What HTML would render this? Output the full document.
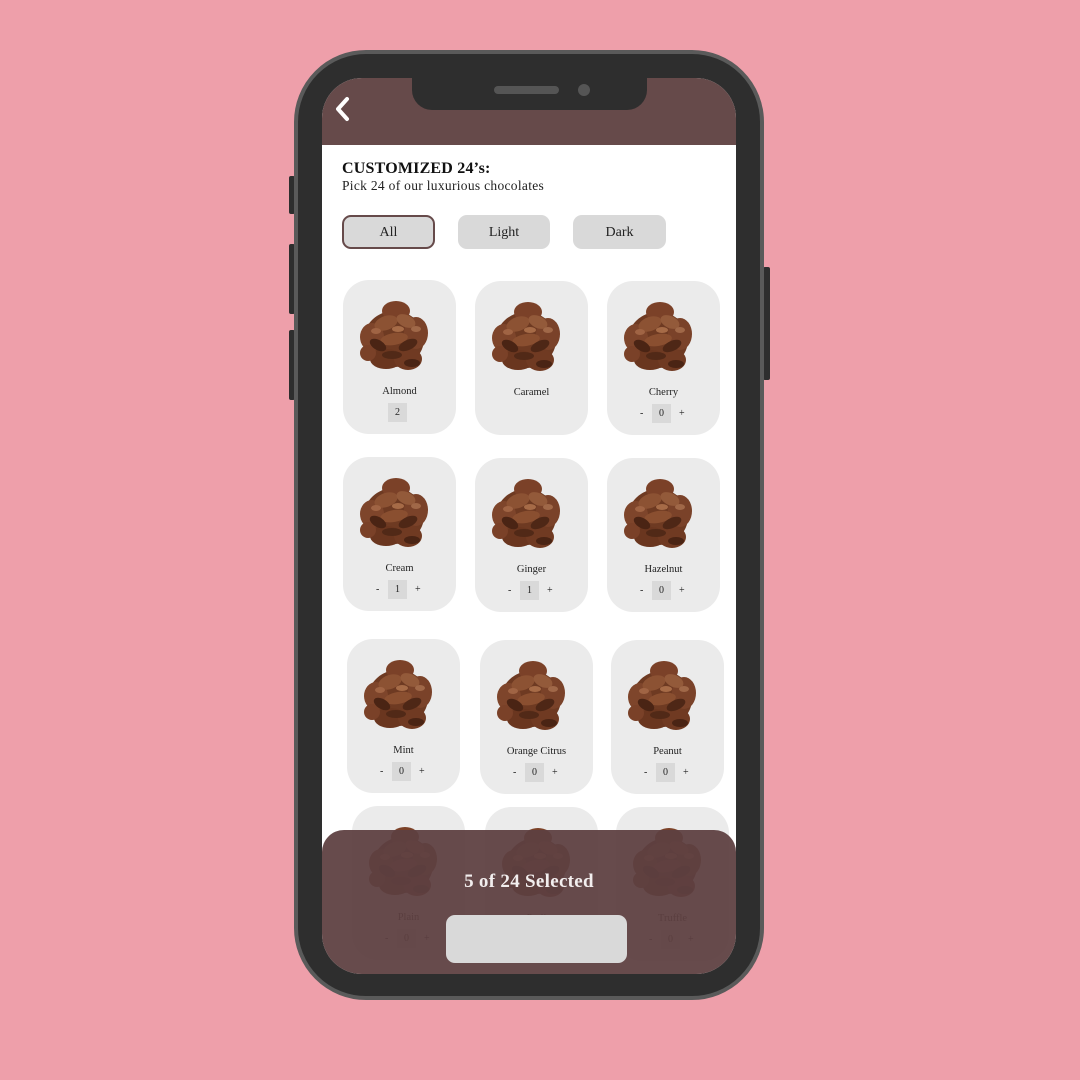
<!DOCTYPE html>
<html><head><meta charset="utf-8">
<style>
*{margin:0;padding:0;box-sizing:border-box}
body{width:1080px;height:1080px;background:#ee9faa;position:relative;overflow:hidden;font-family:"Liberation Serif",serif}
.abs{position:absolute}
.phone{left:294px;top:50px;width:470px;height:950px;border-radius:72px;background:#2e2e2e;border:4px solid #5a5a5a}
.btn{background:#2e2e2e;border-radius:2px}
.screen{left:322px;top:78px;width:414px;height:896px;border-radius:40px;background:#fff;overflow:hidden}
.header{left:0;top:0;width:414px;height:67px;background:#664a4a}
.notch{left:90px;top:0;width:235px;height:32px;background:#2e2e2e;border-radius:0 0 20px 20px}
.card{width:113px;height:154px;border-radius:26px;background:#ebebeb}
.card svg{position:absolute;left:13px;top:17px;width:76px;height:78px}
.lbl{position:absolute;left:0;width:113px;top:106px;text-align:center;font-size:10.5px;color:#222}
.cnt{position:absolute;top:123px;left:0;width:113px;height:19px;font-size:10px;color:#222}
.box{position:absolute;left:45px;top:0;width:19px;height:19px;background:#d9d9d9;text-align:center;line-height:19px}
.mi{position:absolute;left:33px;top:0;line-height:19px}
.pl{position:absolute;left:72px;top:0;line-height:19px}
.fbtn{height:34px;border-radius:9px;background:#d9d9d9;text-align:center;line-height:36px;font-size:14px;color:#222;top:137px}
</style></head><body>
<svg width="0" height="0" style="position:absolute">
<defs>
<symbol id="choc" viewBox="0 0 76 78">
<g>
<ellipse cx="38" cy="42" rx="30" ry="28" fill="#6e3a22"/>
<ellipse cx="40" cy="14" rx="14" ry="10" fill="#7b4128"/>
<ellipse cx="16" cy="40" rx="12" ry="14" fill="#7e452b"/>
<ellipse cx="60" cy="36" rx="12" ry="16" fill="#7a4229"/>
<ellipse cx="30" cy="62" rx="16" ry="10" fill="#6a361f"/>
<ellipse cx="52" cy="62" rx="14" ry="11" fill="#703a22"/>
<ellipse cx="12" cy="56" rx="8" ry="8" fill="#7a4128"/>
<ellipse cx="30" cy="26" rx="12" ry="7" fill="#8c5233" transform="rotate(-20 30 26)"/>
<ellipse cx="50" cy="24" rx="10" ry="6" fill="#935a3a" transform="rotate(25 50 24)"/>
<ellipse cx="38" cy="42" rx="14" ry="6" fill="#8a4f30" transform="rotate(-10 38 42)"/>
<ellipse cx="22" cy="48" rx="9" ry="5" fill="#4a2414" transform="rotate(30 22 48)"/>
<ellipse cx="52" cy="48" rx="10" ry="5" fill="#4e2716" transform="rotate(-25 52 48)"/>
<ellipse cx="36" cy="58" rx="10" ry="4" fill="#512917"/>
<ellipse cx="56" cy="66" rx="8" ry="4" fill="#4a2414"/>
<ellipse cx="42" cy="32" rx="6" ry="3" fill="#a66b47"/>
<ellipse cx="20" cy="34" rx="5" ry="3" fill="#a06444"/>
<ellipse cx="60" cy="32" rx="5" ry="3" fill="#a06848"/>
</g>
</symbol>
</defs></svg>

<div class="abs btn" style="left:289px;top:176px;width:6px;height:38px"></div>
<div class="abs btn" style="left:289px;top:244px;width:6px;height:70px"></div>
<div class="abs btn" style="left:289px;top:330px;width:6px;height:70px"></div>
<div class="abs btn" style="left:763px;top:267px;width:7px;height:113px"></div>
<div class="abs phone"></div>

<div class="abs screen">
  <div class="abs header"></div>
  <svg class="abs" style="left:10px;top:17px" width="22" height="28" viewBox="0 0 22 28"><path d="M15 4 L6 14 L15 24" stroke="#fff" stroke-width="4" fill="none" stroke-linecap="round" stroke-linejoin="round"/></svg>
  <div class="abs notch">
    <div class="abs" style="left:82px;top:8px;width:65px;height:8px;border-radius:4px;background:#555"></div>
    <div class="abs" style="left:166px;top:6px;width:12px;height:12px;border-radius:50%;background:#555"></div>
  </div>
  <div class="abs" style="left:20px;top:82px;font-size:16px;font-weight:bold;color:#111;letter-spacing:0.2px">CUSTOMIZED 24’s:</div>
  <div class="abs" style="left:20px;top:100px;font-size:13.5px;color:#222;letter-spacing:0.3px">Pick 24 of our luxurious chocolates</div>
  <div class="abs fbtn" style="left:20px;width:93px;border:2px solid #664a4a;line-height:32px">All</div>
  <div class="abs fbtn" style="left:136px;width:92px">Light</div>
  <div class="abs fbtn" style="left:251px;width:93px">Dark</div>
</div>

<div id="cards"></div>

<div class="abs" style="left:322px;top:830px;width:414px;height:144px;border-radius:22px 22px 40px 40px;background:rgba(94,64,65,0.94)"></div>
<div class="abs" style="left:322px;top:871px;width:414px;text-align:center;color:#f2eeee;font-size:19px;font-weight:bold;letter-spacing:0.3px">5 of 24 Selected</div>
<div class="abs" style="left:446px;top:915px;width:181px;height:48px;border-radius:9px;background:#d9d9d9"></div>

<script>
var data=[
[343,280,"Almond","box2"],[475,281,"Caramel","none"],[607,281,"Cherry","0"],
[343,457,"Cream","1"],[475,458,"Ginger","1"],[607,458,"Hazelnut","0"],
[347,639,"Mint","0"],[480,640,"Orange Citrus","0"],[611,640,"Peanut","0"],
[352,806,"Plain","0"],[485,807,"Praline","0"],[616,807,"Truffle","0"]];
var h="";
data.forEach(function(d){
 var c='<div class="abs card" style="left:'+d[0]+'px;top:'+d[1]+'px"><svg viewBox="0 0 76 78"><use href="#choc"/></svg><div class="lbl">'+d[2]+'</div>';
 if(d[3]=="box2") c+='<div class="cnt"><div class="box">2</div></div>';
 else if(d[3]!="none") c+='<div class="cnt"><span class="mi">-</span><div class="box">'+d[3]+'</div><span class="pl">+</span></div>';
 c+='</div>';h+=c;});
document.getElementById("cards").innerHTML=h;
</script>
</body></html>
